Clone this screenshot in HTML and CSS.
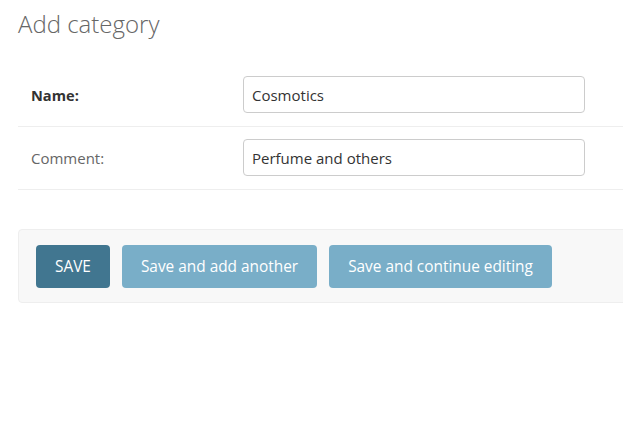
FILE: index.html
```html
<!DOCTYPE html>
<html>
<head>
<meta charset="utf-8">
<link rel="stylesheet" href="styles.css">
</head>
<body>
<div class="page">
  <h1 class="title">Add category</h1>
  <form class="form">
    <div class="row">
      <label class="label required">Name:</label>
      <input class="field" type="text" value="Cosmotics">
    </div>
    <div class="row">
      <label class="label">Comment:</label>
      <input class="field" type="text" value="Perfume and others">
    </div>
    <div class="submit-row">
      <button type="button" class="btn btn-default">SAVE</button>
      <button type="button" class="btn">Save and add another</button>
      <button type="button" class="btn">Save and continue editing</button>
    </div>
  </form>
</div>
</body>
</html>
```

FILE: styles.css
```css
html, body {
  margin: 0;
  padding: 0;
  background: #fff;
  overflow: hidden;
}
body {
  font-family: "Open Sans", "Noto Sans", sans-serif;
  color: #333;
}
.page {
  width: 720px;
  padding: 0 0 0 18px;
}
.title {
  margin: 0;
  padding-top: 8px;
  font-size: 24px;
  font-weight: 300;
  color: #666;
  line-height: 32px;
  height: 36px;
}
.form {
  margin-top: 19px;
}
.row {
  display: flex;
  align-items: center;
  height: 63px;
  border-bottom: 1px solid #eee;
  box-sizing: border-box;
}
.row:first-child {
  height: 64px;
}
.row + .row {
  padding-bottom: 1px;
}
.label {
  width: 212px;
  padding-left: 13px;
  font-size: 15px;
  color: #666;
}
.label.required {
  font-weight: 700;
  font-size: 14.6px;
  color: #333;
}
.field {
  width: 342px;
  height: 37px;
  box-sizing: border-box;
  border: 1px solid #ccc;
  border-radius: 4px;
  padding: 0 8px;
  font-family: inherit;
  font-size: 15px;
  color: #333;
  background: #fff;
}
.submit-row {
  margin-top: 39px;
  display: flex;
  align-items: center;
  gap: 12px;
  padding: 15px 17px;
  height: 74px;
  box-sizing: border-box;
  background: #f8f8f8;
  border: 1px solid #eee;
  border-radius: 4px;
}
.btn {
  height: 43px;
  padding: 1px 19px 0;
  border: none;
  border-radius: 4px;
  background: #79aec8;
  color: #fff;
  font-family: inherit;
  font-size: 15.4px;
}
.btn-default {
  background: #417690;
}
```
